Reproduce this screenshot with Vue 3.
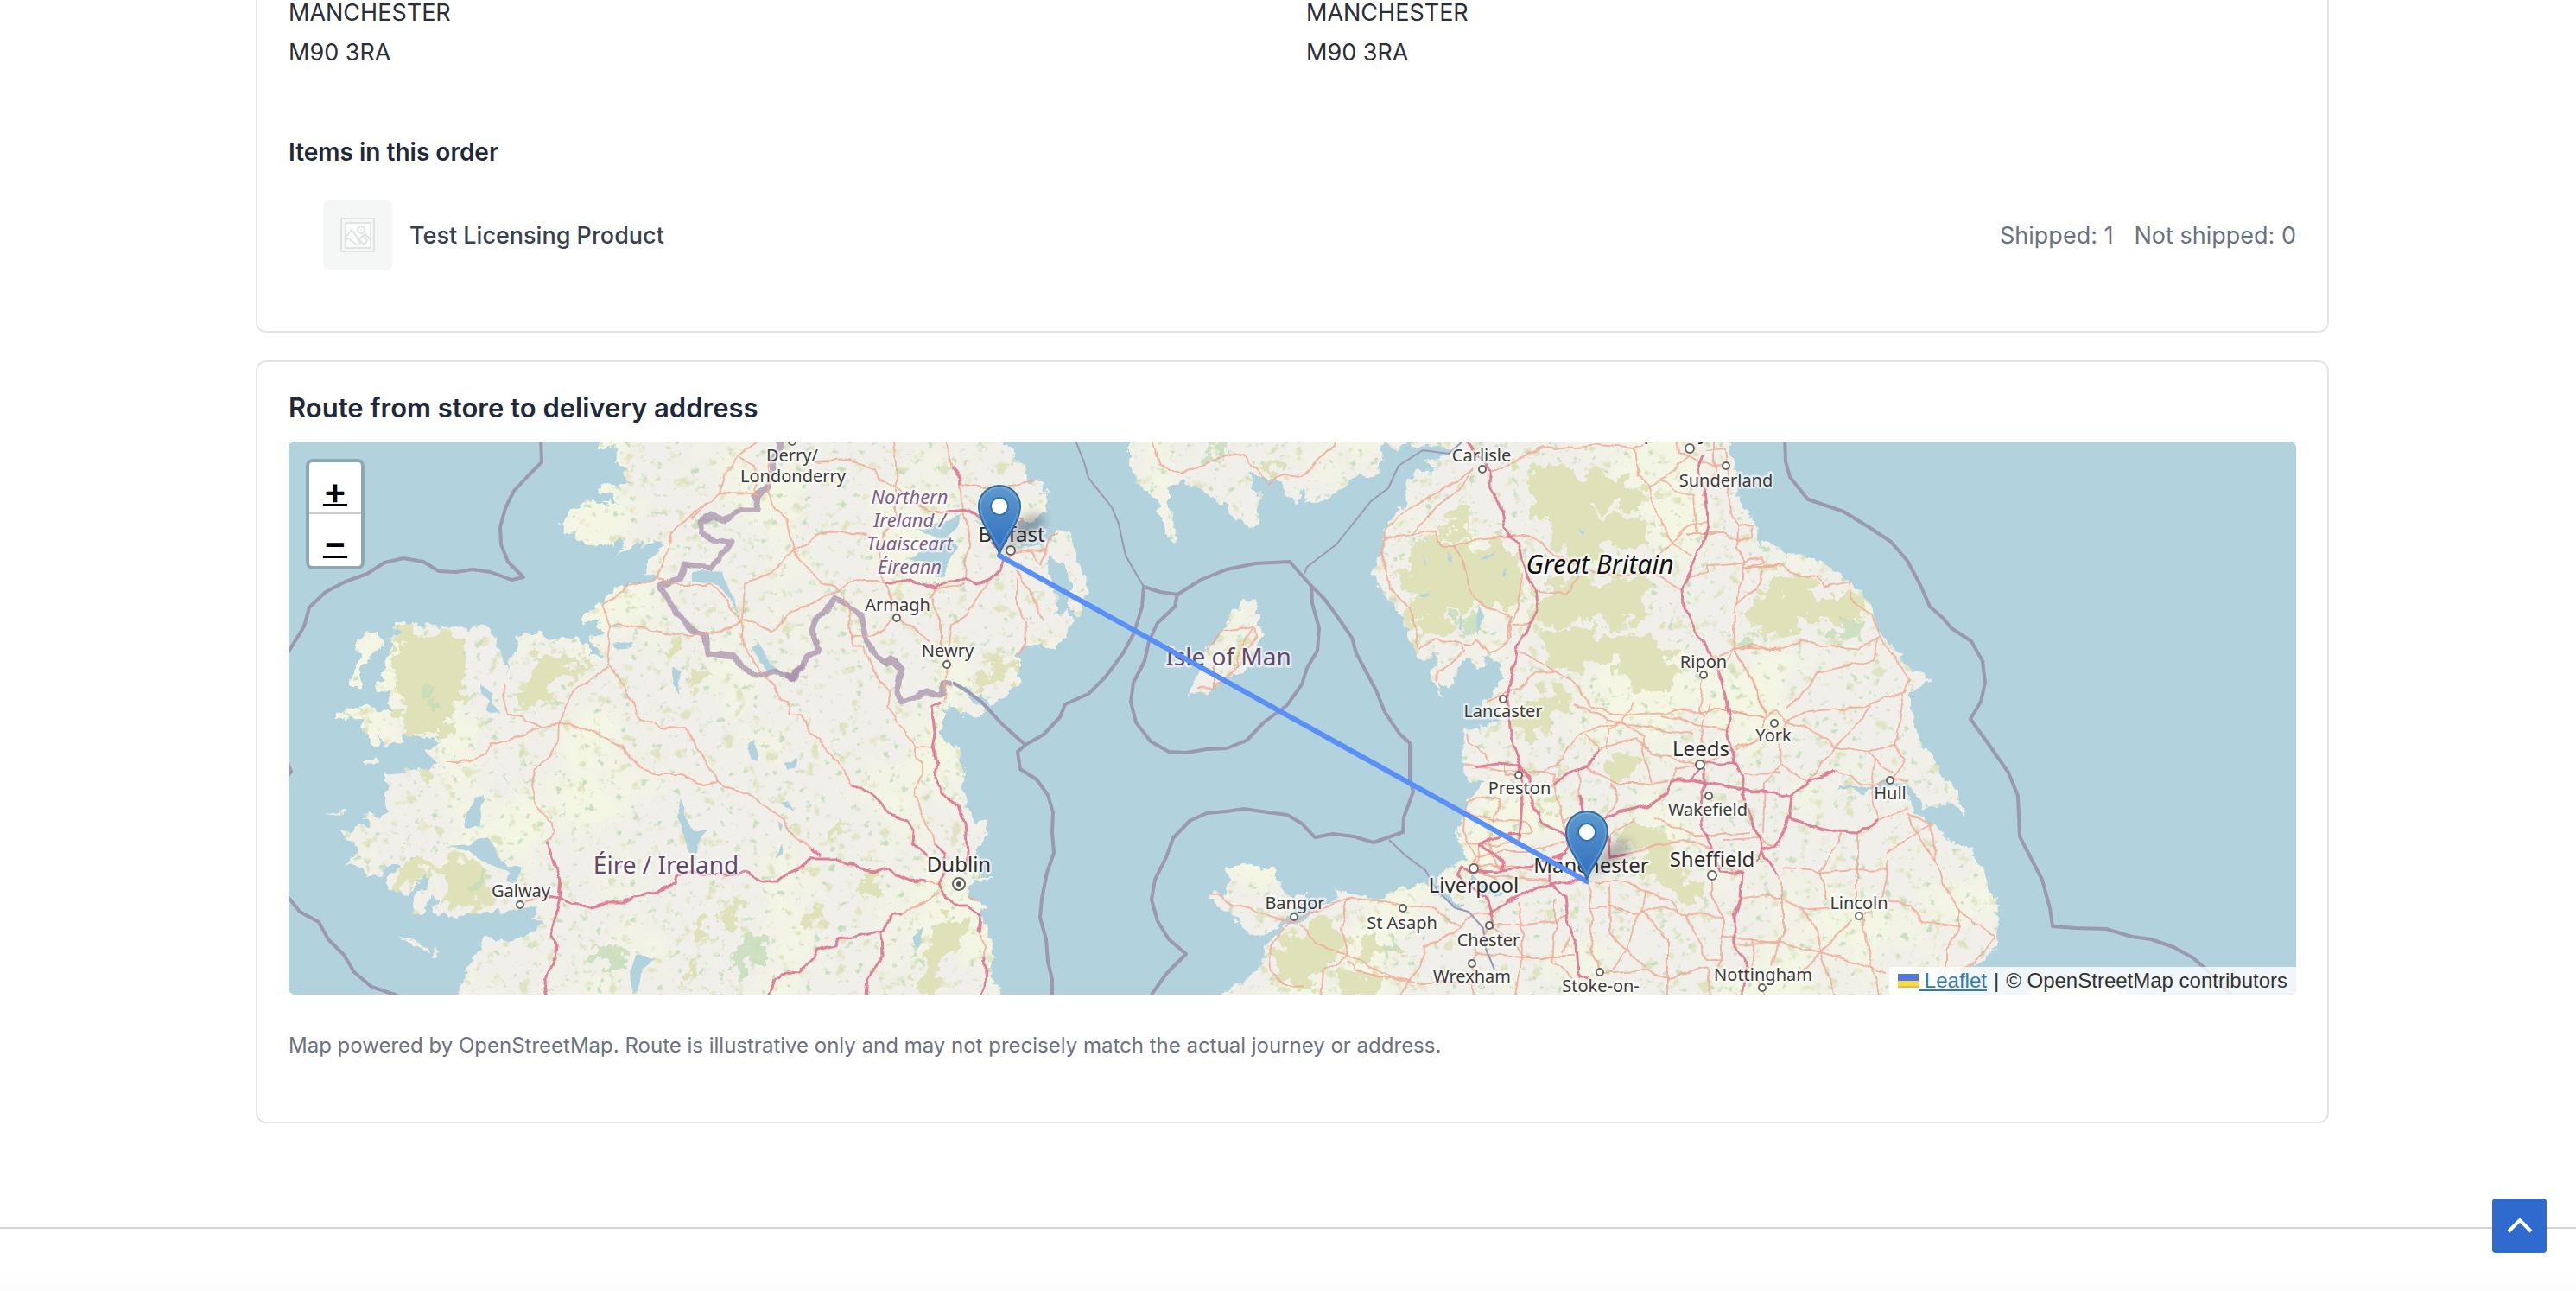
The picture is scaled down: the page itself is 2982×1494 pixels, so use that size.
<template>
  <div class="page">
    <main class="container">
      <section class="card card-order">
        <div class="addresses">
          <address v-for="(address, i) in addresses" :key="i" class="address">
            <span v-for="line in address" :key="line">{{ line }}</span>
          </address>
        </div>
        <h3 class="items-title">Items in this order</h3>
        <ul class="items">
          <li v-for="item in items" :key="item.name" class="item">
            <span class="thumb">
              <svg viewBox="0 0 40 40" width="40" height="40" fill="none" stroke="#e1e3e3">
                <rect x="1" y="1" width="38" height="38" stroke-width="2" />
                <rect x="6" y="6" width="29" height="29" stroke-width="2" fill="#fbfcfc" />
                <circle cx="24" cy="14" r="4" stroke-width="2" />
                <path d="M6 23l7-9 6 8 4 9M6 26l3-2 11 8M19 22l8 9 4-4-5-6-3 3M26 21l3-2 6 7" stroke-width="2" />
              </svg>
            </span>
            <span class="item-name">{{ item.name }}</span>
            <span class="item-status">
              <span>Shipped: {{ item.shipped }}</span>
              <span>Not shipped: {{ item.notShipped }}</span>
            </span>
          </li>
        </ul>
      </section>

      <section class="card card-route">
        <h2 class="route-title">Route from store to delivery address</h2>
        <div class="map">
          <svg class="tiles" viewBox="334 511 2324 640" preserveAspectRatio="xMidYMid slice">
            <defs>
              <!-- roughens the coast and scatters woodland and moorland over it -->
              <filter id="terrain" x="334" y="500" width="2324" height="660" filterUnits="userSpaceOnUse" color-interpolation-filters="sRGB">
                <feTurbulence type="fractalNoise" baseFrequency="0.09" numOctaves="3" seed="4" result="rough" />
                <feDisplacementMap in="SourceGraphic" in2="rough" scale="14" xChannelSelector="R" yChannelSelector="G" result="land" />
                <feTurbulence type="fractalNoise" baseFrequency="0.1" numOctaves="4" seed="11" result="n1" />
                <feColorMatrix in="n1" type="matrix" values="0 0 0 0 .79  0 0 0 0 .87  0 0 0 0 .75  7 0 0 0 -4.6" result="wood" />
                <feTurbulence type="fractalNoise" baseFrequency="0.06" numOctaves="5" seed="23" result="n2" />
                <feColorMatrix in="n2" type="matrix" values="0 0 0 0 .88  0 0 0 0 .89  0 0 0 0 .75  0 7 0 0 -4.5" result="moor" />
                <feTurbulence type="fractalNoise" baseFrequency="0.008" numOctaves="5" seed="7" result="n3" />
                <feColorMatrix in="n3" type="matrix" values="0 0 0 0 .955  0 0 0 0 .965  0 0 0 0 .89  0 4 0 0 -1.9" result="farm" />
                <feMerge result="cover">
                  <feMergeNode in="farm" />
                  <feMergeNode in="moor" />
                  <feMergeNode in="wood" />
                </feMerge>
                <feComposite in="cover" in2="land" operator="in" result="inside" />
                <feMerge>
                  <feMergeNode in="land" />
                  <feMergeNode in="inside" />
                </feMerge>
              </filter>
              <filter id="ragged" x="334" y="500" width="2324" height="660" filterUnits="userSpaceOnUse" color-interpolation-filters="sRGB">
                <feTurbulence type="fractalNoise" baseFrequency="0.05" numOctaves="4" seed="9" />
                <feDisplacementMap in="SourceGraphic" scale="50" xChannelSelector="R" yChannelSelector="G" />
              </filter>
              <filter id="wobble" x="334" y="500" width="2324" height="660" filterUnits="userSpaceOnUse" color-interpolation-filters="sRGB">
                <feTurbulence type="fractalNoise" baseFrequency="0.05" numOctaves="2" seed="2" />
                <feDisplacementMap in="SourceGraphic" scale="9" xChannelSelector="R" yChannelSelector="G" />
              </filter>
              <filter id="soft" x="-50%" y="-50%" width="200%" height="200%">
                <feGaussianBlur stdDeviation="6" />
              </filter>
              <linearGradient id="pin" x1="0" y1="0" x2="0" y2="1">
                <stop offset="0" stop-color="#5d9acd" />
                <stop offset="1" stop-color="#2e6cc0" />
              </linearGradient>
              <clipPath id="land-clip">
                <polygon v-for="(p, i) in land" :key="i" :points="p" />
              </clipPath>
            </defs>

            <rect x="0" y="0" width="3000" height="1500" fill="#b2d2de" />
            <g fill="#f0efe9" filter="url(#terrain)">
              <polygon v-for="(p, i) in land" :key="i" :points="p" />
            </g>
            <g clip-path="url(#land-clip)">
              <g fill="#dfe2b9" filter="url(#ragged)">
                <polygon v-for="(p, i) in hills" :key="i" :points="p" />
              </g>
              <g fill="#c5dcb8" fill-opacity=".8" filter="url(#ragged)">
                <polygon v-for="(p, i) in woods" :key="i" :points="p" />
              </g>
            </g>
            <g fill="#b2d2de" filter="url(#wobble)">
              <polygon v-for="(p, i) in lakes" :key="i" :points="p" />
            </g>
            <g fill="none" stroke-linejoin="round" filter="url(#wobble)">
              <polyline v-for="(p, i) in landBorders" :key="i" :points="p" stroke="#a58fab" stroke-opacity=".72" stroke-width="7" />
              <polyline v-for="(p, i) in trunkRoads" :key="i" :points="p" stroke="#f0a893" stroke-opacity=".8" stroke-width="2" />
              <g transform="matrix(1 0 0 0.9865 0 6.75)">
                <polyline v-for="(p, i) in coastRoads" :key="i" :points="p" stroke="#f0a893" stroke-opacity=".8" stroke-width="2" />
              </g>
              <polyline v-for="(p, i) in motorways" :key="i" :points="p" stroke="#dc7690" stroke-opacity=".9" stroke-width="3" />
            </g>
            <g fill="none" stroke="#9b98b2" stroke-linejoin="round">
              <polyline v-for="(p, i) in seaBorders" :key="i" :points="p" stroke-width="4" />
              <polyline v-for="(p, i) in thinBorders" :key="i" :points="p" stroke-width="2" />
            </g>

            <g class="towns">
              <circle v-for="(t, i) in dots" :key="i" :cx="t[0]" :cy="t[1]" :r="t[2]" />
              <circle cx="1110" cy="1023" r="7" />
              <circle class="capital" cx="1110" cy="1023" r="3" />
            </g>
            <g class="labels">
              <text v-for="(l, i) in labels" :key="i" :x="l.x" :y="l.y" :class="l.kind">{{ l.text }}</text>
            </g>

            <polyline points="1157,643 1837,1020" class="route-line" />
            <g v-for="m in markers" :key="m.x" :transform="`translate(${m.x - 25} ${m.y - 82})`">
              <path d="M26 80L40 52Q58 28 76 36Q82 46 62 58Z" fill="#000" opacity=".26" filter="url(#soft)" />
              <path d="M25 80C22 68 1 44 1 25A24 24 0 0 1 49 25C49 44 28 68 25 80Z" fill="url(#pin)" stroke="#2f6c9f" stroke-width="2" />
              <path d="M25 74C21 62 3 43 3 25A22 22 0 0 1 47 25C47 43 29 62 25 74Z" fill="none" stroke="#fff" stroke-opacity=".16" stroke-width="2" />
              <circle cx="25" cy="25" r="10" fill="#fff" stroke="#3474ad" stroke-width="2" />
            </g>
          </svg>

          <div class="zoom">
            <a href="#" role="button" title="Zoom in" aria-label="Zoom in">+</a>
            <a href="#" role="button" title="Zoom out" aria-label="Zoom out">&#x2212;</a>
          </div>
          <div class="attribution">
            <a href="#"><svg width="24" height="16" viewBox="0 0 12 8"><path fill="#5577db" d="M0 0h12v4H0z" /><path fill="#f8d84a" d="M0 4h12v3H0z" /><path fill="#dfbd48" d="M0 7h12v1H0z" /></svg> Leaflet</a>
            <span>|</span>
            <span>© OpenStreetMap contributors</span>
          </div>
        </div>
        <p class="note">
          Map powered by OpenStreetMap. Route is illustrative only and may not precisely match the actual journey or address.
        </p>
      </section>
    </main>

    <footer class="footer"></footer>

    <button type="button" class="to-top" aria-label="Back to top" @click="scrollTop">
      <svg width="30" height="20" viewBox="0 0 30 20" fill="none" stroke="#fff" stroke-width="4">
        <path d="M2 16L15 3l13 13" />
      </svg>
    </button>
  </div>
</template>

<script setup>
const addresses = [
  ['MANCHESTER', 'M90 3RA'],
  ['MANCHESTER', 'M90 3RA']
];

const items = [{ name: 'Test Licensing Product', shipped: 1, notShipped: 0 }];

const markers = [
  { x: 1157, y: 643 },
  { x: 1837, y: 1020 }
];

const land = [
  // Ireland
  '691,505 693,517 703,518 707,513 712,520 718,523 712,535 725,543 723,557 732,560 713,560 693,563 703,572 717,583 697,580 713,588 687,580 673,583 657,597 648,605 653,615 670,625 687,633 697,628 710,633 720,623 725,628 712,645 733,630 743,623 742,635 753,628 765,622 767,633 755,647 747,662 760,667 753,672 733,675 710,682 697,697 673,713 675,722 697,715 690,725 703,733 683,740 690,752 700,758 687,757 673,740 653,738 643,743 625,733 603,732 597,752 588,763 587,783 583,757 573,747 572,735 565,727 550,723 542,730 533,727 513,728 502,723 487,724 467,718 455,725 467,732 453,738 455,750 447,763 442,780 448,787 435,793 438,803 453,797 448,810 455,825 438,820 420,817 395,823 387,830 400,833 420,830 420,848 438,865 440,845 443,863 463,860 468,852 505,855 510,863 492,870 507,883 497,890 467,892 447,897 447,930 457,942 420,945 428,953 395,962 403,973 417,980 413,990 398,1003 417,1002 427,1012 443,1013 447,1000 463,1000 448,1020 457,1032 473,1035 487,1020 493,1010 493,1027 480,1037 478,1057 492,1060 497,1037 507,1040 502,1055 520,1061 553,1057 603,1052 622,1050 617,1063 628,1065 620,1077 600,1083 587,1092 577,1087 562,1085 557,1100 545,1113 533,1140 527,1160 1155,1160 1157,1140 1148,1135 1151,1113 1148,1090 1142,1073 1135,1058 1140,1047 1120,1038 1125,1020 1147,1017 1130,1007 1128,988 1135,977 1143,963 1140,953 1130,950 1118,933 1113,903 1117,887 1110,880 1112,863 1093,860 1089,847 1093,830 1093,820 1102,817 1117,827 1133,830 1138,822 1125,812 1115,793 1148,815 1167,803 1180,790 1180,763 1175,758 1190,747 1207,745 1220,752 1237,737 1242,717 1237,705 1220,710 1223,693 1220,680 1212,660 1213,643 1237,657 1240,680 1237,697 1247,718 1258,687 1260,673 1252,660 1243,633 1237,615 1223,613 1208,630 1177,633 1178,603 1197,603 1212,587 1213,570 1205,558 1190,558 1188,547 1177,532 1170,520 1160,505',
  // Great Britain
  '1307,505 1307,538 1318,559 1338,578 1347,605 1348,620 1363,625 1360,609 1352,584 1352,565 1370,554 1390,565 1417,584 1430,601 1450,611 1457,601 1455,584 1460,576 1447,563 1447,546 1460,554 1480,554 1487,569 1503,582 1510,565 1512,582 1527,582 1547,572 1563,552 1580,550 1597,548 1600,534 1597,517 1603,513 1617,520 1633,513 1650,517 1670,516 1680,521 1677,528 1657,530 1650,536 1663,543 1653,546 1640,543 1627,563 1625,584 1613,599 1602,615 1600,643 1588,664 1603,685 1625,715 1630,736 1640,756 1650,765 1662,755 1663,765 1655,778 1660,797 1670,807 1664,791 1673,797 1683,786 1693,761 1703,761 1708,775 1718,773 1720,756 1737,769 1740,786 1727,803 1713,816 1737,832 1723,841 1695,845 1693,896 1703,904 1720,906 1703,921 1693,946 1687,961 1693,984 1700,994 1693,996 1668,1009 1662,1024 1693,1051 1685,1051 1660,1030 1645,1022 1617,1030 1597,1039 1567,1037 1557,1033 1545,1026 1552,1039 1533,1048 1510,1064 1487,1072 1473,1087 1462,1098 1460,1115 1453,1127 1427,1144 1400,1160 2250,1160 2278,1122 2312,1098 2313,1059 2310,1043 2297,1013 2282,984 2256,972 2236,953 2217,940 2208,916 2191,908 2173,912 2152,921 2143,912 2126,914 2139,906 2160,912 2182,904 2208,906 2217,921 2230,936 2256,931 2275,942 2271,925 2247,892 2221,853 2212,820 2212,799 2236,788 2228,780 2204,769 2199,756 2178,736 2169,706 2152,681 2126,662 2108,649 2069,639 2041,624 2037,634 2033,606 2013,580 2009,546 2000,513 1999,505',
  // Anglesey, Isle of Man
  '1418,1005 1447,1000 1472,1005 1480,1022 1487,1035 1513,1035 1505,1048 1490,1060 1473,1077 1460,1086 1447,1083 1423,1055 1410,1048 1397,1037 1403,1033 1418,1035 1423,1022',
  '1455,694 1455,723 1464,731 1457,744 1440,778 1413,790 1403,801 1380,803 1372,808 1383,790 1395,756 1420,723 1427,706 1440,697',
  // west coast islands
  '430,730 415,738 412,748 420,760 408,780 407,792 417,795 417,777 425,767 435,750 448,747 437,735',
  '422,883 435,878 439,883 422,888',
  '375,943 395,937 397,942 385,944',
  '460,1084 487,1090 495,1100 476,1094',
  '499,1106 507,1100 508,1104 501,1109',
  '2337,1151 2360,1142 2440,1142 2480,1151 2480,1165 2337,1165'
];

const hills = [
  '463,727 533,730 540,757 537,783 530,830 540,833 505,850 470,850 463,820 453,767',
  '620,747 623,760 687,763 640,797 600,825 603,800',
  '467,993 490,982 500,997 533,993 567,1013 567,1040 525,1055 510,1033 513,1010 487,1010 473,1033 457,1023',
  '487,893 507,895 503,908 490,905',
  '1087,1067 1113,1060 1120,1083 1100,1110 1087,1133 1083,1151 1060,1151 1070,1103',
  '1123,797 1153,760 1180,767 1177,783 1147,797',
  '1637,623 1657,620 1673,633 1693,630 1740,633 1760,643 1760,683 1750,703 1720,703 1693,707 1660,733 1643,750 1638,713 1623,673 1613,667',
  '1673,600 1703,597 1707,623 1673,628',
  '1758,543 1773,533 1793,537 1813,543 1860,550 1903,567 1900,590 1847,587 1860,597 1913,603 1903,630 1860,633 1837,650 1807,647 1787,617 1773,573',
  '1777,690 1793,678 1827,673 1860,667 1910,673 1907,700 1920,713 1880,723 1827,717 1810,727 1777,717',
  '1783,730 1827,733 1893,733 1933,747 1943,777 1927,800 1893,800 1870,767 1833,770 1807,777 1787,757',
  '1760,807 1800,797 1820,813 1800,830 1777,853 1753,840',
  '1860,880 1880,863 1907,877 1893,903 1863,903',
  '1783,925 1797,920 1802,935 1787,942',
  '1880,943 1913,953 1937,977 1940,1000 1960,1020 1967,1050 1953,1043 1927,1020 1903,1020 1900,987 1880,977',
  '2022,702 2052,681 2052,662 2100,669 2104,686 2139,686 2165,710 2130,719 2087,723 2035,732',
  '1513,1068 1547,1064 1557,1098 1533,1115 1525,1131 1513,1151 1480,1139 1477,1098',
  '1570,1089 1600,1085 1630,1102 1580,1110',
  '1547,1127 1600,1131 1597,1155 1550,1155',
  '1423,736 1443,732 1447,749 1420,765',
  '1460,530 1480,524 1478,549 1462,551',
  '765,742 800,738 790,755 770,757',
  '800,768 830,775 815,800 800,800',
  '835,1050 860,1045 850,1065 830,1062',
  '930,1055 950,1050 952,1075 935,1072',
  '995,1018 1015,1018 1018,1038 1000,1042',
  '805,1065 825,1062 818,1078 804,1080',
  '965,955 977,952 973,972 966,970',
  '795,1120 815,1110 810,1140 798,1138'
];

const woods = [
  '850,1095 880,1085 893,1100 870,1120 850,1135 843,1125',
  '690,1090 720,1092 735,1125 700,1120 680,1105',
  '2126,710 2160,715 2147,740 2121,744',
  '1685,718 1705,712 1712,730 1698,735',
  '1600,1087 1620,1090 1618,1104 1604,1102',
  '1395,515 1420,512 1415,525 1398,524',
  '548,1005 562,1010 560,1025 550,1022',
  '1060,1085 1070,1080 1062,1110 1056,1108',
  '2015,737 2040,732 2030,752 2018,750',
  '808,598 825,600 830,620 815,615',
  '497,800 505,790 508,820 500,828'
];

const lakes = [
  '1063,613 1113,597 1110,610 1097,620 1107,633 1093,667 1083,670 1080,650 1050,647 1063,640 1087,623',
  '800,662 837,660 843,680 860,717 850,700 830,677 800,672',
  '867,747 877,743 893,767 910,780 890,777',
  '790,925 783,943 790,957 793,967 795,987 807,987 810,967 820,960 803,962 793,947',
  '738,1107 760,1107 743,1120 740,1140 732,1150 730,1133',
  '550,923 560,920 553,957 538,958 537,947',
  '517,980 543,978 567,968 573,987 587,1003 603,1003 597,1023 587,1020 590,1010 560,997 543,984',
  '557,793 570,800 568,813 578,825 563,822 565,810 557,802',
  '777,773 789,775 785,805 780,790',
  '908,883 923,878 920,887 910,890',
  '902,928 912,926 920,940 908,932',
  '897,990 908,978 906,988 899,994',
  '900,950 908,955 905,962',
  '1058,1085 1066,1075 1069,1090 1062,1098',
  '868,862 876,858 878,880 870,878',
  '710,745 733,742 730,748 714,750',
  '715,1003 722,1000 720,1006',
  '1714,650 1735,636 1720,642',
  '1711,697 1716,712 1712,735 1709,720',
  '1688,728 1693,708 1690,730',
  '1645,690 1655,682 1650,690',
  '1646,640 1652,655 1648,650',
  '1676,637 1680,650 1675,648',
  '1737,665 1744,656 1740,668',
  '1825,612 1834,616 1832,619',
  '1730,1038 1745,1032 1730,1028 1712,1018 1705,1008 1703,1016 1712,1030'
];

const seaBorders = [
  '626,505 627,535 610,552 595,568 585,588 579,610 580,630 588,650 606,668 592,671 568,662 547,659 528,662 508,661 490,650 467,646 445,651 425,664 400,673 377,685 358,703 352,725 334,754 330,760',
  '333,883 337,893 333,898',
  '330,1034 347,1055 369,1067 380,1087 398,1105 410,1125 430,1142 457,1151 470,1156',
  '1103,790 1120,800 1137,813 1160,838 1187,862 1178,870 1181,890 1200,902 1213,920 1219,940 1218,963 1220,987 1212,1010 1206,1040 1204,1062 1211,1087 1213,1113 1218,1133 1218,1160',
  '1187,862 1208,850 1227,830 1233,815 1260,803 1280,783 1300,756 1313,732 1322,702 1324,679 1343,685 1363,688',
  '1363,688 1390,671 1420,659 1453,652 1493,650 1517,677 1533,693 1547,712 1565,738 1570,756 1593,799 1603,824 1620,849 1632,860 1632,904 1636,916 1625,946 1624,963 1590,975 1567,968 1543,965 1522,969 1507,953 1490,943 1467,940 1440,936 1420,939 1397,941 1377,950 1358,970 1350,992 1337,1018 1333,1041 1340,1066 1353,1087 1373,1104 1350,1127 1333,1151',
  '1363,688 1360,702 1340,721 1330,742 1325,765 1312,790 1309,812 1315,836 1332,858 1353,870 1373,871 1397,867 1420,866 1443,857 1463,836 1490,816 1507,792 1513,773 1525,753 1527,727 1519,698 1518,677',
  '2066,505 2067,534 2072,552 2093,578 2111,584 2134,592 2165,611 2189,627 2208,649 2223,677 2234,702 2249,715 2259,727 2282,742 2295,765 2298,790 2293,812 2281,832 2304,864 2325,894 2336,921 2338,968 2364,1018 2373,1051 2376,1072 2403,1074 2438,1075 2468,1084 2490,1087 2516,1096 2538,1108 2553,1121 2583,1151'
];

const thinBorders = [
  '1324,679 1303,643 1295,606 1287,587 1260,553 1255,535 1243,505',
  '1510,664 1513,656 1547,630 1587,580 1607,565 1619,539 1647,521 1677,525 1693,511',
  '1608,972 1627,990 1650,1007 1663,1030 1685,1051 1700,1055 1717,1074 1720,1098 1730,1122'
];

const landBorders = [
  '903,505 902,520 893,533 895,543 888,563 877,575 875,590 857,590 838,602 825,595 812,603 812,615 823,625 848,628 833,643 823,657 792,653 785,670 763,678 783,710 803,730 817,733 820,757 850,760 873,783 900,777 917,783 930,773 932,760 948,753 940,730 943,720 967,693 977,697 997,713 1002,737 1013,760 1027,767 1033,762 1043,773 1038,803 1045,812 1073,802 1090,803 1093,790 1103,790',
  '910,780 920,784 928,772 922,778 914,784'
];

const motorways = [
  '635,1037 648,1039 663,1047 683,1049 703,1043 720,1043 733,1037 763,1033 782,1022 784,1010 837,1012 862,1010 882,1020 900,1020 910,1012 927,1005 940,993 967,993 980,1000 993,1003 1010,1007 1030,1004 1038,1013 1053,1019 1073,1021',
  '628,1155 635,1127 642,1110 644,1093 637,1082 643,1060 648,1040 650,1018 640,997 633,973',
  '988,911 1000,911 1020,927 1028,940 1050,948 1057,960 1056,975 1073,993',
  '952,990 940,982',
  '1090,812 1078,817 1082,847 1079,867 1085,883 1083,900 1088,917 1110,933 1118,953 1121,987 1115,1013',
  '1082,977 1093,987 1093,1010 1087,1020 1097,1040 1103,1048 1120,1048 1135,1058 1133,1080',
  '1141,1105 1141,1120 1140,1143 1135,1155',
  '1043,1057 1033,1057 1022,1077 970,1087 967,1095 947,1100 932,1117 925,1125 910,1124 897,1133 890,1155',
  '1020,1078 1021,1107 1003,1133 1001,1155',
  '1160,643 1158,660 1147,672 1130,677 1117,670 1097,671 1082,680 1073,677 1043,672 1023,672',
  '1097,592 1120,590 1137,600 1153,633',
  '1102,542 1113,553 1110,560',
  '1693,505 1707,523 1725,543 1725,567 1740,590 1743,613 1757,630 1767,663 1777,683 1780,707 1755,750 1752,780 1745,800 1748,843 1752,863 1760,885 1770,900 1773,927 1787,953 1813,967 1817,980 1793,1007 1793,1020 1812,1037 1815,1070 1825,1090 1827,1127 1840,1133',
  '1760,885 1762,923 1759,973',
  '1707,887 1733,883 1760,885',
  '1798,910 1810,898 1837,888 1850,868',
  '1693,1020 1687,1010 1690,1003 1703,1007 1740,1008 1773,1002 1813,987',
  '1740,1008 1740,997 1713,978 1733,968 1760,965',
  '1723,1057 1753,1040 1777,1028 1807,1020 1833,1020',
  '1693,1020 1720,1037 1727,1060 1730,1075',
  '1857,950 1873,940 1907,932 1930,918 1935,902 1957,902 1987,908 2017,913 2060,920 2072,921 2093,904 2126,894',
  '1973,528 1967,543 1973,567 1977,610 1970,633 1957,660 1947,680 1948,703 1980,757 1993,787 2002,830 2000,850 2007,883 2018,900 2017,917 2030,953 2040,983 2056,1012',
  '1957,902 1973,883 2007,883',
  '1973,890 1973,907 1968,920 1970,953 1982,983 1990,1007 2017,1010 2015,1040 2008,1060 2008,1097 2022,1117 2017,1155',
  '2075,921 2072,946 2056,978 2041,982 2033,996',
  '2072,948 2100,957 2126,963 2150,964 2173,950',
  '1828,920 1832,943',
  '1862,967 1863,993 1883,990'
];

const trunkRoads = [
  '607,1042 635,1037',
  '633,973 641,963 640,953 622,935 615,910 620,890 637,873 648,857 649,837 653,817 665,797 690,783 703,770',
  '820,582 807,590 778,617 770,637 762,668 723,680 697,700 707,727 703,767 723,793 733,817 743,832 767,840 793,843 810,867 820,888 830,903',
  '707,727 715,722 750,728 800,735 833,730 858,718',
  '762,670 787,677 823,677 843,697 858,718',
  '517,882 533,882 563,872 567,862 587,857 607,852 625,840 663,838 690,848 720,863 727,875 757,896 787,896 813,907 830,903 837,910 873,922 907,948 920,968 952,990',
  '582,790 588,828 603,828 610,835 625,840',
  '858,718 860,747 890,790 910,813 915,827 928,826 937,845 957,867 977,892 988,911',
  '1093,810 1095,783 1096,767 1102,723 1120,710 1145,673',
  '1023,672 1000,672 980,675 972,683 953,673 933,657 918,637 910,600 897,588 888,567 890,530',
  '977,690 982,707 985,748 1000,750 1010,777 1030,800 1027,820 1060,865 1079,868',
  '1060,865 1060,877 1068,883 1068,897 1058,920 1073,950 1082,977',
  '1133,1080 1140,1097 1141,1120',
  '1120,1038 1132,1040',
  '1043,1057 1088,1033',
  '1073,1021 1087,1021',
  '945,535 983,533 1013,543 1017,555 1037,563 1037,600 1023,617 1018,640 1022,672 1037,700 1037,715 1020,732 997,735 983,740',
  '1033,505 1037,533 1037,563 1053,580 1077,590 1097,592',
  '1093,505 1102,542',
  '1110,560 1113,590 1122,610 1120,633 1118,670',
  '1110,560 1133,563 1170,563 1197,557',
  '918,637 950,617 990,616 1017,623',
  '918,637 893,663 862,675 860,717 893,730 917,707 943,697 972,683',
  '800,600 833,572 880,573',
  '833,572 840,547 853,527 880,508',
  '853,527 873,540 877,572',
  '1177,660 1177,700 1188,720 1187,747 1177,758',
  '1177,660 1197,693 1208,720',
  '1167,647 1183,637 1213,638 1217,620 1225,617',
  '1193,638 1205,653 1213,638',
  '1037,715 1063,728 1077,743',
  '1077,693 1090,720 1090,760',
  '1082,682 1117,675',
  '1082,682 1075,693',
  '1170,600 1183,600 1160,628',
  '1707,543 1683,558 1650,577 1617,598 1603,617 1598,647 1610,680 1623,693 1635,713 1642,752 1663,738 1677,743 1703,747 1710,740 1723,755 1747,740 1747,713 1720,703 1702,683 1693,647 1683,633 1670,633 1662,615 1633,618 1603,622',
  '1683,633 1703,625 1745,620 1773,620 1793,640 1807,647 1853,665 1910,663 1947,683',
  '1633,618 1693,560 1707,543',
  '1693,747 1695,755 1663,777 1662,787',
  '1778,685 1813,687 1827,670 1830,655',
  '1725,542 1740,542 1760,528 1787,517 1800,520 1850,514 1893,518 1923,508',
  '1893,518 1897,550 1910,563 1913,587 1923,600 1928,620 1958,645',
  '1910,563 1923,555 1953,530 1973,537 1998,539',
  '1923,555 1937,568 1960,573 1962,600 1965,617',
  '1940,505 1942,525 1953,530',
  '1985,505 1985,545 1970,575',
  '1937,627 1957,607 1977,605',
  '1952,618 1997,618 2013,627',
  '1937,627 1923,640 1913,647',
  '1975,522 1997,520 2000,550 2003,593 2013,607 2012,633 2018,647 2017,667 2010,693 2007,750 2023,777 2033,800 2043,827',
  '2013,607 2030,605 2027,620 2013,627',
  '1957,665 1977,663 1977,653 2020,650 2040,643 2043,650 2020,658 2060,655',
  '2040,660 2037,677 2010,700',
  '1983,760 2007,752 2027,748 2060,752',
  '2007,752 1993,777',
  '1972,780 1967,820 1975,828',
  '1757,752 1800,777 1827,793 1840,817 1880,828 1937,823 1967,822 2003,822 2040,828',
  '1720,813 1743,802 1760,797 1777,778 1800,777',
  '1762,663 1758,700 1748,720 1750,740',
  '1750,723 1773,722',
  '1995,972 2035,970',
  '1695,883 1743,892 1787,893 1807,880 1827,850 1877,835 1890,815',
  '1743,884 1743,897 1767,897',
  '1698,847 1700,860 1720,872 1723,880',
  '1798,907 1807,943 1813,967',
  '1827,893 1829,930',
  '1837,850 1850,868 1893,853 1913,873 1953,882 1968,885',
  '1833,887 1853,897 1873,907 1907,907 1930,903',
  '1860,947 1872,923 1867,907',
  '1877,835 1903,853 1903,877 1913,907',
  '1860,868 1860,845 1877,835',
  '1820,815 1880,838 1960,850',
  '1973,883 1970,840 1980,815',
  '1923,827 1970,840 2003,845',
  '2008,870 2037,853',
  '1935,902 1940,890 1968,885 1990,875 2005,868',
  '1803,900 1797,912 1800,895 1787,893',
  '1697,930 1707,923 1737,925 1733,940 1727,950',
  '1697,930 1695,963 1707,993 1706,1005',
  '1707,993 1733,985 1773,985 1813,973',
  '1733,968 1773,963 1767,950 1727,948 1700,940',
  '1713,978 1710,1000 1727,1013 1760,1017 1793,1020',
  '1727,963 1723,987 1740,1007',
  '1706,1005 1725,1000 1773,1007',
  '1706,1005 1730,1015 1740,1028',
  '1700,975 1728,978 1760,973',
  '1808,955 1820,945 1857,950',
  '1862,967 1880,955 1893,950',
  '1560,1040 1597,1042 1627,1050 1653,1047 1673,1062 1690,1072 1707,1058 1723,1057',
  '1690,1072 1677,1082 1650,1095 1643,1120 1630,1137 1570,1123 1560,1110',
  '1630,1137 1623,1155',
  '1707,1137 1630,1137',
  '1723,1073 1707,1100 1703,1117 1707,1155',
  '1730,1070 1763,1070 1793,1067 1815,1060',
  '1728,1072 1757,1097 1763,1107 1823,1107',
  '1707,1103 1763,1107',
  '1757,1043 1763,1087 1760,1120 1753,1155',
  '1800,1040 1800,1073 1797,1113 1820,1130',
  '1820,1073 1810,1103',
  '1837,1017 1843,1053 1840,1097 1853,1127 1907,1123 1930,1130 1977,1120 1980,1155',
  '1843,1050 1863,1050 1893,1057 1920,1050 1953,1058 1993,1060',
  '1847,1020 1880,1020 1917,1037 1933,1043 1943,1057',
  '1862,1023 1863,1077 1883,1100 1907,1120',
  '1907,1033 1893,1067 1883,1100 1867,1123',
  '1900,1053 1930,1087 1930,1155',
  '1953,1058 1967,1090 1977,1110 1993,1110',
  '1982,1017 1982,1040 1993,1060 1993,1110 1983,1130',
  '1883,990 1920,977 1960,973 1982,983',
  '1913,947 1930,953 1960,967 1980,967 2027,963',
  '1982,983 2007,1007',
  '1993,1083 2020,1087 2060,1093',
  '2015,1040 2045,1035 2063,1041',
  '2030,1087 2027,1120 2045,1155',
  '1333,505 1342,538 1367,550 1397,534 1440,525 1450,538 1470,559 1483,550 1507,552 1543,517 1545,505'
];

// Yorkshire and Lincolnshire, north Wales, Isle of Man
const coastRoads = [
  '2017,658 2061,656 2082,669 2102,670 2111,681 2141,676 2145,701 2167,715 2176,741 2195,765 2210,790 2204,807 2195,865 2204,884 2191,905',
  '2009,756 2056,754 2087,744 2108,752 2152,755 2176,741',
  '2069,826 2104,782 2169,767 2171,743',
  '2065,841 2087,828 2160,822 2208,803',
  '2065,841 2095,848 2126,869 2165,875 2195,867',
  '2009,756 2026,786 2043,828',
  '2041,833 2056,826 2065,841 2059,856 2041,846 2041,833',
  '2000,826 2041,833',
  '2037,860 2007,871',
  '2059,858 2062,892 2093,910',
  '2062,892 2043,914 2041,969',
  '2018,900 2062,900',
  '2165,822 2152,841 2126,867 2093,910',
  '2163,875 2171,884 2167,914 2173,956',
  '2171,884 2191,901',
  '2126,899 2143,903 2152,914 2167,914 2189,907 2208,907',
  '2173,956 2208,942',
  '2150,971 2150,1050',
  '2065,1012 2108,1015 2186,1012 2186,991 2236,961 2208,948',
  '2236,961 2241,1003 2249,1029 2269,1063 2310,1092',
  '2269,1063 2269,1080 2252,1106 2252,1165',
  '2186,1012 2178,1046 2156,1067 2160,1097 2176,1165',
  '2269,1080 2226,1074 2212,1055 2186,1050',
  '2063,1048 2087,1061 2117,1059',
  '2087,1061 2104,1084 2108,1110 2126,1165',
  '2108,1110 2143,1072',
  '2108,1110 2074,1144',
  '2009,1102 2056,1099 2108,1110 2152,1123 2182,1136',
  '2310,1092 2286,1123 2265,1133',
  '2212,952 2217,969 2241,1003',
  '2130,970 2130,982 2108,1012 2115,1050',
  '2056,1018 2063,1029 2063,1089 2050,1127',
  '2017,922 2020,945 2041,980 2060,985',
  '1403,1042 1430,1055 1467,1065 1497,1076 1527,1059 1563,1046',
  '1493,1076 1470,1102 1472,1131 1487,1151 1510,1150',
  '1507,1076 1520,1099 1560,1114 1553,1084 1560,1046',
  '1560,1114 1533,1131 1530,1165',
  '1560,1114 1613,1140 1633,1144',
  '1397,758 1418,733 1453,728 1433,756 1430,777 1405,801 1387,802',
  '1405,801 1405,773',
  '1453,728 1455,742 1430,777'
];

const dots = [
  [1038, 715, 4], [1096, 769, 4], [1170, 637, 5], [602, 1047, 4], [917, 511, 4],
  [1716, 543, 4], [1998, 539, 4], [1956, 519, 5], [1972, 781, 4], [1740, 809, 4],
  [1758, 897, 4], [1968, 885, 5], [1978, 921, 4], [2054, 837, 4], [2188, 903, 4],
  [2152, 1060, 4], [1982, 1013, 5], [2040, 1143, 4], [1852, 1125, 4], [1706, 1005, 5],
  [1624, 1051, 4], [1724, 1071, 4], [1704, 1115, 4], [1498, 1061, 4]
];

const labels = [
  { text: 'Derry/', x: 917, y: 534, kind: 'town' },
  { text: 'Londonderry', x: 918, y: 558, kind: 'town' },
  { text: 'Northern', x: 1053, y: 583, kind: 'region' },
  { text: 'Ireland /', x: 1053, y: 610, kind: 'region' },
  { text: 'Tuaisceart', x: 1053, y: 637, kind: 'region' },
  { text: 'Éireann', x: 1053, y: 664, kind: 'region' },
  { text: 'Armagh', x: 1039, y: 707, kind: 'town' },
  { text: 'Newry', x: 1097, y: 760, kind: 'town' },
  { text: 'Belfast', x: 1171, y: 627, kind: 'city' },
  { text: 'Galway', x: 603, y: 1038, kind: 'town' },
  { text: 'Éire / Ireland', x: 771, y: 1011, kind: 'country' },
  { text: 'Dublin', x: 1110, y: 1009, kind: 'city' },
  { text: 'Isle of Man', x: 1422, y: 770, kind: 'country' },
  { text: 'Carlisle', x: 1715, y: 534, kind: 'town' },
  { text: 'upon Tyne', x: 1947, y: 508, kind: 'city' },
  { text: 'Sunderland', x: 1998, y: 563, kind: 'town' },
  { text: 'Great Britain', x: 1852, y: 664, kind: 'island' },
  { text: 'Ripon', x: 1972, y: 773, kind: 'town' },
  { text: 'Lancaster', x: 1740, y: 830, kind: 'town' },
  { text: 'Preston', x: 1759, y: 919, kind: 'town' },
  { text: 'Leeds', x: 1969, y: 875, kind: 'city' },
  { text: 'Wakefield', x: 1977, y: 944, kind: 'town' },
  { text: 'York', x: 2053, y: 858, kind: 'town' },
  { text: 'Hull', x: 2188, y: 925, kind: 'town' },
  { text: 'Lincoln', x: 2152, y: 1052, kind: 'town' },
  { text: 'Sheffield', x: 1982, y: 1003, kind: 'city' },
  { text: 'Nottingham', x: 2041, y: 1135, kind: 'town' },
  { text: 'Stoke-on-', x: 1853, y: 1148, kind: 'town' },
  { text: 'Manchester', x: 1842, y: 1010, kind: 'city' },
  { text: 'Liverpool', x: 1706, y: 1033, kind: 'city' },
  { text: 'St Asaph', x: 1623, y: 1075, kind: 'town' },
  { text: 'Chester', x: 1723, y: 1095, kind: 'town' },
  { text: 'Wrexham', x: 1704, y: 1137, kind: 'town' },
  { text: 'Bangor', x: 1499, y: 1052, kind: 'town' }
];

function scrollTop() {
  window.scrollTo({ top: 0, behavior: 'smooth' });
}
</script>

<style>
body { background: #fff; overflow-x: hidden; }
</style>

<style scoped>
* { margin: 0; padding: 0; box-sizing: border-box; }
.page {
  font-family: Inter, 'Liberation Sans', sans-serif;
  font-size: 27px;
  color: #2b2f38;
  min-height: 100vh;
  overflow: hidden;
  display: flex;
  flex-direction: column;
}
.container {
  width: 100%; max-width: 2410px; margin: 0 auto; padding-left: 10px;
  display: flex; flex-direction: column; gap: 32px;
}
.card { border: 2px solid #e5e5e5; border-radius: 12px; padding: 36px; }
.card-order { margin-top: -38px; padding-bottom: 71px; }
.addresses { display: grid; grid-template-columns: 1fr 1fr; gap: 32px; }
.address { display: flex; flex-direction: column; gap: 16px; font-style: normal; line-height: 30px; }
.items-title {
  margin-top: 80px; font-size: 28px; line-height: 40px;
  font-weight: 600; color: #1e293b;
}
.items { list-style: none; margin-top: 36px; padding-left: 40px; }
.item { display: flex; align-items: center; gap: 20px; }
.thumb {
  width: 80px; height: 80px; border-radius: 6px; background: #f5f7f7;
  display: flex; align-items: center; justify-content: center;
}
.item-name { font-weight: 500; color: #374151; }
.item-status { margin-left: auto; display: flex; gap: 24px; color: #6b7280; }
.card-route { padding-bottom: 68px; }
.route-title { font-size: 31px; line-height: 34px; font-weight: 600; color: #1e293b; }
.map {
  position: relative; height: 640px; margin-top: 22px;
  border-radius: 8px; overflow: hidden; background: #b2d2de;
}
.tiles { display: block; width: 100%; height: 100%; }
.towns circle { fill: #fff; stroke: #66665f; stroke-width: 2; }
.towns .capital { fill: #55554c; stroke: none; }
.labels text {
  font-family: 'Noto Sans', 'Open Sans', sans-serif;
  text-anchor: middle;
  paint-order: stroke;
  stroke: rgba(255, 255, 255, 0.6);
  stroke-width: 5px;
  stroke-linejoin: round;
}
.labels .town { font-size: 20px; fill: #3c3c3a; }
.labels .city { font-size: 24px; fill: #2e2e2c; }
.labels .region { font-size: 22px; font-style: italic; fill: #7f5f8a; }
.labels .country { font-size: 28px; fill: #64486c; }
.labels .island { font-size: 30px; font-style: italic; fill: #111; }
.route-line { fill: none; stroke: #5a8ff6; stroke-width: 6; stroke-linecap: round; }
.zoom {
  position: absolute; top: 20px; left: 20px; display: flex; flex-direction: column;
  border: 4px solid rgba(0, 0, 0, 0.2); border-radius: 8px; background-clip: padding-box;
}
.zoom a {
  width: 60px; height: 60px; background: #fff; color: #000;
  font: 600 42px/66px Inter, sans-serif; text-align: center;
  text-decoration-thickness: 3px; text-underline-offset: 0; text-decoration-skip-ink: none;
}
.zoom a:first-child { border-bottom: 2px solid #ccc; border-radius: 4px 4px 0 0; }
.zoom a:last-child { border-radius: 0 0 4px 4px; }
.attribution {
  position: absolute; right: 0; bottom: 0; padding: 0 10px;
  display: flex; gap: 8px; white-space: pre;
  background: rgba(255, 255, 255, 0.8); color: #333;
  font: 24px/32px 'Liberation Sans', sans-serif;
}
.attribution a { color: #2f7cb0; }
.note { margin-top: 39px; font-size: 24px; line-height: 40px; color: #6b7280; }
.footer { margin-top: 120px; flex: 1; border-top: 2px solid #d1d5db; background: linear-gradient(#fff 46px, #fcfcfc); }
.to-top {
  position: fixed; right: 34px; bottom: 44px; width: 63px; height: 63px;
  border: 0; border-radius: 4px; background: #2f6bcf; cursor: pointer;
  display: flex; align-items: center; justify-content: center;
}
</style>
